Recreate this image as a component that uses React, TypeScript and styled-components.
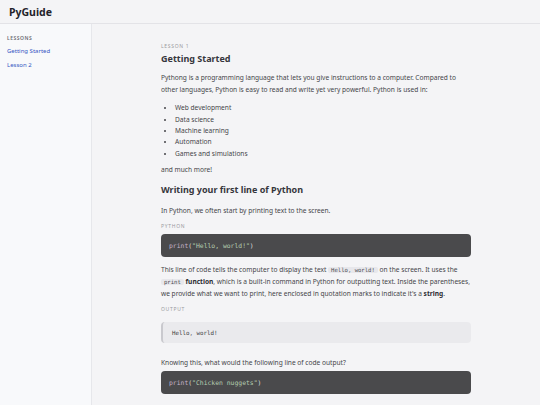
import React from 'react';
import styled, { createGlobalStyle } from 'styled-components';

const GlobalStyle = createGlobalStyle`
    html, body {
        margin: 0;
        padding: 0;
        background: #f4f4f6;
    }
    body {
        font-family: "Noto Sans", "Open Sans", sans-serif;
        color: #454549;
    }
`

const Page = styled.div`
    display: flex;
    flex-direction: column;
    min-height: 405px;
`

const Header = styled.header`
    height: 24px;
    box-sizing: border-box;
    display: flex;
    align-items: center;
    padding: 0 9px;
    background: #f4f4f6;
    border-bottom: 1px solid #e3e3e7;
`

const Logo = styled.div`
    font-size: 10.5px;
    font-weight: 700;
    color: #23232a;
`

const Body = styled.div`
    display: flex;
    flex: 1;
`

const Sidebar = styled.aside`
    width: 92px;
    flex: 0 0 92px;
    box-sizing: border-box;
    background: #f8f9fb;
    border-right: 1px solid #e6e7eb;
    padding: 10px 7px;
    display: flex;
    flex-direction: column;
`

const SideTitle = styled.div`
    font-size: 5px;
    font-weight: 600;
    letter-spacing: 0.1em;
    color: #6b6b72;
    line-height: 8px;
    margin-bottom: 5px;
`

const SideLink = styled.a`
    font-size: 6px;
    line-height: 9px;
    color: #3557c4;
    text-decoration: none;
    margin-bottom: 5px;
`

const Main = styled.main`
    flex: 1;
    display: flex;
    justify-content: center;
    padding-top: 18px;
`

const Content = styled.article`
    width: 310px;
    display: flex;
    flex-direction: column;
`

const Eyebrow = styled.div<{ mt?: number }>`
    font-size: 5px;
    line-height: 8px;
    letter-spacing: 0.14em;
    text-transform: uppercase;
    color: #9a9aa0;
    margin-top: ${p => p.mt || 0}px;
`

const Title = styled.h1`
    margin: 2px 0 0;
    font-size: 9px;
    line-height: 14px;
    font-weight: 700;
    color: #36363c;
`

const Subtitle = styled.h2`
    margin: 7px 0 0;
    font-size: 9px;
    line-height: 14px;
    font-weight: 700;
    color: #36363c;
`

const Para = styled.p<{ mt?: number }>`
    margin: ${p => p.mt ?? 6}px 0 0;
    font-size: 6.6px;
    line-height: 11.7px;
    color: #454549;

    strong {
        font-weight: 700;
        color: #2c2c32;
    }
`

const List = styled.ul`
    margin: 7px 0 0;
    padding-left: 14px;
    font-size: 6.6px;
    line-height: 11.3px;

    li::marker {
        font-size: 6px;
    }
`

const CodeBlock = styled.pre<{ mt?: number }>`
    margin: ${p => p.mt ?? 4}px 0 0;
    height: 23px;
    box-sizing: border-box;
    display: flex;
    align-items: center;
    padding: 0 8px;
    background: #4a4a4c;
    border-radius: 4px;
    font-family: "DejaVu Sans Mono", "Liberation Mono", monospace;
    font-size: 6.4px;
    color: #dcdcdc;
`

const Fn = styled.span`
    color: #c4b2c8;
`

const Str = styled.span`
    color: #b4cdb0;
`

const OutputBlock = styled.pre`
    margin: 9px 0 0;
    height: 21px;
    box-sizing: border-box;
    display: flex;
    align-items: center;
    padding: 0 9px;
    background: #eaeaed;
    border-left: 2px solid #c9c9ce;
    border-radius: 4px;
    font-family: "DejaVu Sans Mono", "Liberation Mono", monospace;
    font-size: 5.8px;
    color: #3a3a40;
`

const InlineCode = styled.code`
    font-family: "DejaVu Sans Mono", "Liberation Mono", monospace;
    font-size: 5.6px;
    line-height: 7px;
    background: #e7e7eb;
    border-radius: 2px;
    padding: 0 3px;
    color: #4a4a50;
`

const App = () => {
    return (
        <Page>
            <GlobalStyle />
            <Header>
                <Logo>PyGuide</Logo>
            </Header>
            <Body>
                <Sidebar>
                    <SideTitle>LESSONS</SideTitle>
                    <SideLink href="#">Getting Started</SideLink>
                    <SideLink href="#">Lesson 2</SideLink>
                </Sidebar>
                <Main>
                    <Content>
                        <Eyebrow>Lesson 1</Eyebrow>
                        <Title>Getting Started</Title>
                        <Para>
                            Pythong is a programming language that lets you give instructions to a computer. Compared to
                            other languages, Python is easy to read and write yet very powerful. Python is used in:
                        </Para>
                        <List>
                            <li>Web development</li>
                            <li>Data science</li>
                            <li>Machine learning</li>
                            <li>Automation</li>
                            <li>Games and simulations</li>
                        </List>
                        <Para mt={5}>and much more!</Para>
                        <Subtitle>Writing your first line of Python</Subtitle>
                        <Para mt={8}>In Python, we often start by printing text to the screen.</Para>
                        <Eyebrow mt={6}>Python</Eyebrow>
                        <CodeBlock>
                            <Fn>print</Fn>(<Str>"Hello, world!"</Str>)
                        </CodeBlock>
                        <Para mt={7}>
                            This line of code tells the computer to display the text <InlineCode>Hello, world!</InlineCode> on the screen. It uses the{' '}
                            <InlineCode>print</InlineCode> <strong>function</strong>, which is a built-in command in Python for outputting text. Inside the parentheses,
                            we provide what we want to print, here enclosed in quotation marks to indicate it's a <strong>string</strong>.
                        </Para>
                        <Eyebrow mt={6}>Output</Eyebrow>
                        <OutputBlock>Hello, world!</OutputBlock>
                        <Para mt={14}>Knowing this, what would the following line of code output?</Para>
                        <CodeBlock mt={2}>
                            <Fn>print</Fn>(<Str>"Chicken nuggets"</Str>)
                        </CodeBlock>
                    </Content>
                </Main>
            </Body>
        </Page>
    )
}

export default App;
